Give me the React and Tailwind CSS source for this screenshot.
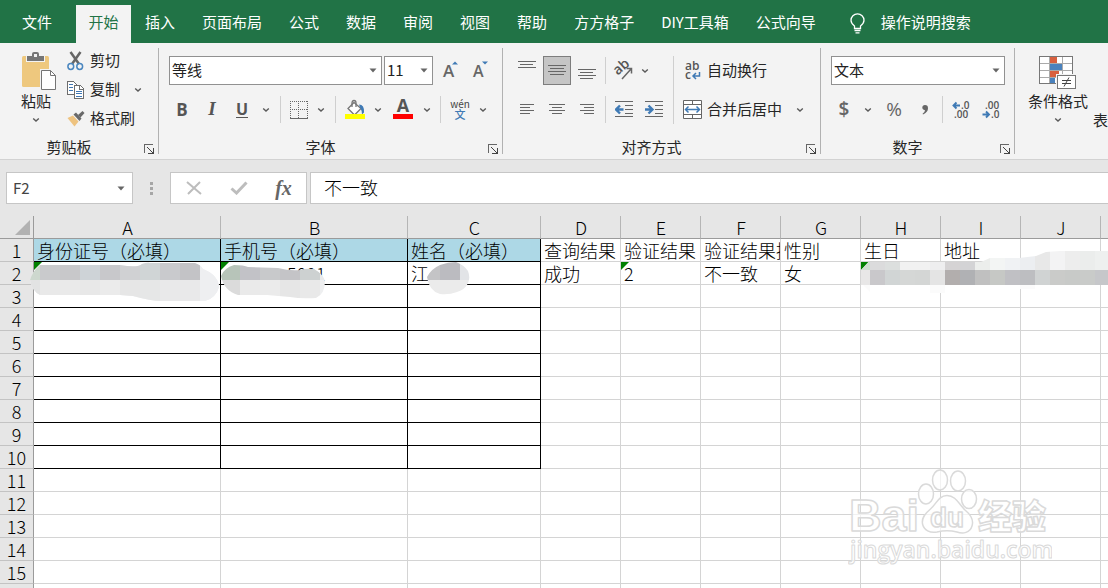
import React from "react";

const tabs = ["插入", "页面布局", "公式", "数据", "审阅", "视图", "帮助", "方方格子", "DIY工具箱", "公式向导"];

const columns = ["A", "B", "C", "D", "E", "F", "G", "H", "I", "J", "K"];

const rows = [
  ["身份证号（必填）", "手机号（必填）", "姓名（必填）", "查询结果", "验证结果", "验证结果描述", "性别", "生日", "地址", "", ""],
  ["", "5001", "江", "成功", "2", "不一致", "女", "", "", "", ""],
  ...Array.from({ length: 14 }, () => Array(11).fill("")),
];

const flagged = [0, 1, 4, 7];

function Chevron() {
  return (
    <svg width="8" height="6" viewBox="0 0 8 6" fill="none" stroke="#5a5a5a" strokeWidth="1.4" aria-hidden="true">
      <path d="M1.2 1.5 4 4.1 6.8 1.5" />
    </svg>
  );
}

function Caret({ className }) {
  return (
    <svg className={className} width="8" height="5" viewBox="0 0 8 5" aria-hidden="true">
      <path d="M0.5 0.5h7L4 4.5z" fill="#666" />
    </svg>
  );
}

function Tool({ label, className = "w-[30px]", children, pressed }) {
  return (
    <button
      type="button"
      aria-label={label}
      aria-pressed={pressed}
      className={`flex h-[29px] shrink-0 items-center justify-center ${className}`}
    >
      {children}
    </button>
  );
}

function More({ label, className = "w-[18px]" }) {
  return (
    <Tool label={label} className={className}>
      <Chevron />
    </Tool>
  );
}

function Combo({ label, value, className }) {
  return (
    <div className={`relative h-[29px] ${className}`}>
      <select aria-label={label} defaultValue={value} className="block h-full w-full appearance-none border border-[#919191] bg-white pl-[2px] text-[15px] text-[#222] outline-none">
        <option>{value}</option>
      </select>
      <Caret className="pointer-events-none absolute right-[5px] top-3" />
    </div>
  );
}

function Divider({ className = "mx-[5px]" }) {
  return <div className={`h-[27px] w-px shrink-0 bg-[#cfcfcf] ${className}`} />;
}

function Group({ title, className, launcher = true, children }) {
  return (
    <section className={`flex shrink-0 flex-col ${className}`}>
      <div className="h-[94px]">{children}</div>
      <div className="flex h-5 items-center">
        <h2 className="flex-1 text-center text-[15px] leading-5">{title}</h2>
        {launcher && (
          <button type="button" aria-label={`${title}设置`} className="flex w-5 pl-[6px] pt-1">
            <svg width="10" height="10" viewBox="0 0 10 10" fill="none" stroke="#666" shapeRendering="crispEdges">
              <path d="M0.5 9V0.5H9" />
              <path d="M3 3l6 6M9.5 4v5.5H4" stroke="#444" />
            </svg>
          </button>
        )}
      </div>
    </section>
  );
}

function GroupLine() {
  return <div className="my-[5px] w-px shrink-0 bg-[#b1b1b1]" />;
}

function Lines({ rows: lines }) {
  return (
    <svg width="20" height="20" viewBox="0 0 20 20" stroke="#666" shapeRendering="crispEdges">
      {lines.map(([x, w, y]) => (
        <path key={y} d={`M${x} ${y}.5h${w}`} />
      ))}
    </svg>
  );
}

function Clipboard() {
  return (
    <Group title="剪贴板" className="w-[158px]">
      <div className="flex pl-[14px]">
        <button type="button" className="flex w-11 flex-col items-center pt-[9px] text-[15px] leading-5">
          <svg width="44" height="38" viewBox="0 0 44 38">
            <path d="M8 5.500q0-1.500 1.500-1.500h24q1.500 0 1.500 1.500V35H9.500Q8 35 8 33.500z" fill="#eec87e" />
            <path d="M12 3h6V2q0-2 2-2h3q2 0 2 2v1h6v7H12z" fill="#f3f3f3" />
            <path d="M13 4h5V2q0-2 2-2h3q2 0 2 2v2h5v5H13z" fill="#767676" />
            <rect x="20" y="2" width="3" height="3" fill="#f3f3f3" />
            <path d="M26 17h17v21H26z" fill="#f3f3f3" />
            <path d="M27.500 18.500h9l5 5v14h-14z" fill="#fff" stroke="#757575" />
            <path d="M36.500 18.500v5h5" fill="none" stroke="#757575" />
          </svg>
          <span className="mt-px">粘贴</span>
          <span className="mt-[6px]"><Chevron /></span>
        </button>
        <div className="ml-[9px] pt-[3px] text-[15px]">
          <button type="button" className="flex h-[29px] items-center gap-[5px]">
            <svg width="18" height="20" viewBox="0 0 18 20" fill="none">
              <path d="M3.500 1 12 13M13.500 1 5 13" stroke="#666" strokeWidth="2.500" />
              <circle cx="3.800" cy="15.500" r="2.900" stroke="#4a86bf" strokeWidth="1.500" />
              <circle cx="12.700" cy="15.500" r="2.900" stroke="#4a86bf" strokeWidth="1.500" />
            </svg>
            剪切
          </button>
          <div className="flex">
            <button type="button" className="flex h-[29px] items-center gap-[5px]">
              <svg width="18" height="20" viewBox="0 0 18 20" fill="#fff" stroke="#6d6d6d" shapeRendering="crispEdges">
                <path d="M.5 1.500h6l3 3v10h-9z" />
                <path d="M7.500 5.500h6l3 3v10h-9z" />
                <path d="M12.500 5.500v4h4" />
                <path d="M2 4.500h4M2 7.500h4M2 10.500h4M9 11.500h6M9 13.500h6M9 16.500h6" stroke="#3f77b3" />
              </svg>
              复制
            </button>
            <More label="复制选项" className="ml-[11px] w-[14px]" />
          </div>
          <button type="button" className="flex h-[29px] items-center gap-[5px]">
            <svg width="18" height="18" viewBox="0 0 18 18">
              <path d="M.5 8 6 5.500 11.500 11.500 7.500 16.500z" fill="#eec380" />
              <path d="M6.500 4.500 9 2.500 14.500 8.500 12.500 11z" fill="#696969" />
              <path d="m11 5 4.500-4 2 2-4 4.500z" fill="#696969" />
            </svg>
            格式刷
          </button>
        </div>
      </div>
    </Group>
  );
}

function FontGroup() {
  return (
    <Group title="字体" className="w-[343px]">
      <div className="flex flex-col gap-[10px] pl-2 pt-[13px]">
        <div className="flex pl-[2px]">
          <Combo label="字体" value="等线" className="mr-[2px] w-[213px]" />
          <Combo label="字号" value="11" className="mr-[2px] w-[49px]" />
          <Tool label="增大字号">
            <svg width="20" height="20" viewBox="0 0 20 20">
              <text x="3" y="16" fontSize="17" fontFamily="Open Sans, sans-serif" fontWeight="600" fill="#666">A</text>
              <path d="M12 3.500h6L15 .5z" fill="#3f7ab5" />
            </svg>
          </Tool>
          <Tool label="减小字号">
            <svg width="20" height="20" viewBox="0 0 20 20">
              <text x="3" y="16" fontSize="16" fontFamily="Open Sans, sans-serif" fontWeight="600" fill="#666">A</text>
              <path d="M12 .5h6l-3 3z" fill="#3f7ab5" />
            </svg>
          </Tool>
        </div>
        <div className="flex items-center">
          <Tool label="加粗"><span className="font-['Open_Sans',sans-serif] text-[17px] font-bold text-[#555]">B</span></Tool>
          <Tool label="倾斜"><span className="font-['Liberation_Serif',serif] text-[19px] font-bold italic text-[#555]">I</span></Tool>
          <Tool label="下划线"><span className="border-b border-[#555] font-['Open_Sans',sans-serif] text-[16px] font-bold leading-4 text-[#555]">U</span></Tool>
          <More label="下划线选项" />
          <Divider />
          <Tool label="边框" className="w-[26px]">
            <svg width="18" height="18" viewBox="0 0 18 18" fill="none" stroke="#666" shapeRendering="crispEdges">
              <path d="M0 .5h18M0 8.500h18M.5 0v17M8.500 0v17M17.500 0v17" strokeDasharray="1 1" />
              <path d="M0 17.500h18" />
            </svg>
          </Tool>
          <More label="边框选项" />
          <Divider />
          <Tool label="填充颜色" className="w-7">
            <svg width="20" height="22" viewBox="0 0 20 22">
              <path d="M9 3.500 16 9.500 9.500 16 3 9.500z" fill="#fff" stroke="#777" strokeWidth="1.300" />
              <path d="M7 8V4q0-2.500 2-2.500T11 4v4" fill="none" stroke="#777" strokeWidth="1.300" />
              <path d="M14 5.500q5.500 0 5 8l-2 2q0-4-1.500-6z" fill="#3f7ab5" />
              <path d="M0 15h20v5H0z" fill="#ff0" />
            </svg>
          </Tool>
          <More label="填充颜色选项" />
          <Tool label="字体颜色" className="w-8">
            <svg width="20" height="22" viewBox="0 0 20 22">
              <text x="10" y="13" textAnchor="middle" fontSize="18" fontFamily="Open Sans, sans-serif" fontWeight="700" fill="#555">A</text>
              <path d="M0 15h20v5H0z" fill="red" />
            </svg>
          </Tool>
          <More label="字体颜色选项" className="w-4" />
          <Divider />
          <Tool label="拼音" className="w-7">
            <svg width="20" height="22" viewBox="0 0 20 22" textAnchor="middle" fontFamily="Noto Sans CJK SC, sans-serif">
              <text x="10" y="9" fontSize="10" fill="#444">wén</text>
              <text x="10" y="20" fontSize="11" fontWeight="500" fill="#3f7ab5">文</text>
            </svg>
          </Tool>
          <More label="拼音选项" />
        </div>
      </div>
    </Group>
  );
}

function AlignGroup() {
  return (
    <Group title="对齐方式" className="w-[317px]">
      <div className="flex pl-[9px] pt-[13px]">
        <div className="flex flex-col gap-[10px]">
          <div className="flex items-center">
            <Tool label="顶端对齐"><Lines rows={[[1, 18, 0], [3, 13, 3], [1, 18, 6]]} /></Tool>
            <Tool label="垂直居中" pressed className="mx-px w-7 border border-[#7d7d7d] bg-[#c5c5c5]">
              <Lines rows={[[1, 18, 4], [3, 14, 7], [1, 18, 10], [3, 14, 13]]} />
            </Tool>
            <Tool label="底端对齐"><Lines rows={[[1, 18, 8], [3, 13, 11], [1, 18, 14], [3, 13, 17]]} /></Tool>
            <Divider className="mx-[3px]" />
            <Tool label="方向">
              <svg width="22" height="20" viewBox="0 0 22 20">
                <text x="3" y="14" fontSize="14" fontFamily="Open Sans, sans-serif" fontWeight="600" fill="#555" transform="rotate(-42 5 12)">ab</text>
                <path d="M9 18 18 8M13.500 7.500h5v5" fill="none" stroke="#666" strokeWidth="1.500" />
              </svg>
            </Tool>
            <More label="方向选项" className="w-3" />
          </div>
          <div className="flex items-center">
            <Tool label="左对齐"><Lines rows={[[3, 14, 4], [3, 10, 7], [3, 14, 10], [3, 10, 13]]} /></Tool>
            <Tool label="居中"><Lines rows={[[2, 16, 4], [5, 10, 7], [2, 16, 10], [5, 10, 13]]} /></Tool>
            <Tool label="右对齐"><Lines rows={[[3, 14, 4], [7, 10, 7], [3, 14, 10], [7, 10, 13]]} /></Tool>
            <Divider className="mx-[3px]" />
            <Tool label="减少缩进量">
              <svg width="18" height="17" viewBox="0 0 18 17">
                <path d="M0 .5h18M10 4.500h8M10 8.500h8M10 12.500h8M0 15.500h18" stroke="#666" shapeRendering="crispEdges" />
                <path d="M8.500 8.500H1.500M5 4.500 1 8.500l4 4" fill="none" stroke="#3f7ab5" strokeWidth="2.400" />
              </svg>
            </Tool>
            <Tool label="增加缩进量">
              <svg width="18" height="17" viewBox="0 0 18 17">
                <path d="M0 .5h18M10 4.500h8M10 8.500h8M10 12.500h8M0 15.500h18" stroke="#666" shapeRendering="crispEdges" />
                <path d="M0 8.500h7M3.500 4.500l4 4-4 4" fill="none" stroke="#3f7ab5" strokeWidth="2.400" />
              </svg>
            </Tool>
          </div>
        </div>
        <div className="ml-1 w-px bg-[#cfcfcf]" />
        <div className="ml-2 flex flex-col gap-[10px] text-[15px]">
          <button type="button" aria-label="自动换行" className="flex h-[29px] items-center gap-[5px]">
            <svg width="20" height="20" viewBox="0 0 20 20">
              <text x="3" y="9" fontSize="12" fontFamily="Open Sans, sans-serif" fontWeight="600" fill="#555">ab</text>
              <text x="3" y="18" fontSize="12" fontFamily="Open Sans, sans-serif" fontWeight="600" fill="#555">c</text>
              <path d="M17.500 11v4h-6M14 12l-3 3 3 3" fill="none" stroke="#3f7ab5" strokeWidth="1.500" />
            </svg>
            自动换行
          </button>
          <div className="flex">
            <button type="button" className="flex h-[29px] items-center gap-[5px]">
              <svg width="20" height="20" viewBox="0 0 20 20">
                <path d="M1.500.5h18v18h-18z" fill="#fff" stroke="#666" />
                <path d="M1 4.500h19M1 14.500h19M10.500 1v4M10.500 14v5" stroke="#666" shapeRendering="crispEdges" />
                <path d="M4 9.500h13M6.500 6.500l-3 3 3 3M14.500 6.500l3 3-3 3" fill="none" stroke="#3f7ab5" strokeWidth="1.500" />
              </svg>
              合并后居中
            </button>
            <More label="合并选项" className="ml-[9px] w-[18px]" />
          </div>
        </div>
      </div>
    </Group>
  );
}

function NumberGroup() {
  return (
    <Group title="数字" className="w-[193px]">
      <div className="flex flex-col gap-[10px] pl-2 pt-[13px]">
        <Combo label="数字格式" value="文本" className="ml-[2px] w-[174px]" />
        <div className="flex items-center text-[#666]">
          <Tool label="会计数字格式"><span className="font-['Open_Sans',sans-serif] text-[19px] font-semibold">$</span></Tool>
          <More label="会计数字格式选项" />
          <Tool label="百分比样式" className="w-[34px]"><span className="font-['Open_Sans',sans-serif] text-[19px]">%</span></Tool>
          <Tool label="千位分隔样式" className="w-7">
            <svg width="8" height="11" viewBox="0 0 8 11"><path d="M4 1q3 0 3 3.300 0 4-5 6.200l-.4-.8Q4 8 4 6.200 1.300 6 1.300 3.600 1.400 1 4 1z" fill="#666" /></svg>
          </Tool>
          <Divider className="mx-[3px]" />
          <Tool label="增加小数位数">
            <svg width="18" height="20" viewBox="0 0 18 20" fontFamily="Open Sans, sans-serif" fontSize="10" fontWeight="600" fill="#555">
              <text x="9" y="9">.0</text>
              <text x="2" y="18">.00</text>
              <path d="M8 5.500H2M4.500 2.500l-3 3 3 3" fill="none" stroke="#3f7ab5" strokeWidth="1.900" />
            </svg>
          </Tool>
          <Tool label="减少小数位数">
            <svg width="18" height="20" viewBox="0 0 18 20" fontFamily="Open Sans, sans-serif" fontSize="10" fontWeight="600" fill="#555">
              <text x="3" y="9">.00</text>
              <text x="9" y="18">.0</text>
              <path d="M.5 14.500h6M4 11.500l3 3-3 3" fill="none" stroke="#3f7ab5" strokeWidth="1.900" />
            </svg>
          </Tool>
        </div>
      </div>
    </Group>
  );
}

function StylesGroup() {
  return (
    <div className="flex shrink-0 text-[15px] leading-5">
      <button type="button" className="ml-2 flex w-[70px] flex-col items-center pt-[13px]">
        <svg width="38" height="34" viewBox="0 0 38 34" shapeRendering="crispEdges">
          <path d="M.5.500h33v27H.5z" fill="#fff" stroke="#777" />
          <path d="M11 1h7v6h-7zM11 15h9v6h-9z" fill="#d8603f" />
          <path d="M11 8h12v6H11zM11 22h5v5h-5z" fill="#4a82bd" />
          <path d="M1 7.500h32M1 14.500h32M1 21.500h32M10.500 1v26M23.500 1v26" stroke="#aaa" />
          <path d="M17 18h21v16H17z" fill="#f3f3f3" />
          <path d="M18.500 19.500h18v13h-18z" fill="#fff" stroke="#777" />
          <path d="M23 24.500h9M23 27.500h9M30 21.500l-5 9" stroke="#444" shapeRendering="auto" />
        </svg>
        <span className="mt-px whitespace-nowrap">条件格式</span>
        <span className="mt-[6px]"><Chevron /></span>
      </button>
      <button type="button" className="whitespace-nowrap pt-[37px]">表格格式</button>
    </div>
  );
}

function Grid() {
  return (
    <div className="relative flex-1 overflow-hidden bg-white">
      <table className="w-[1181px] table-fixed border-separate border-spacing-0 text-[18px] font-light leading-[22px] text-black">
        <colgroup>
          <col className="w-[34px]" />
          <col className="w-[187px]" />
          <col className="w-[187px]" />
          <col className="w-[133px]" />
          {columns.slice(3).map((c) => <col key={c} className="w-[80px]" />)}
        </colgroup>
        <thead>
          <tr className="h-[23px] bg-[#e6e6e6]">
            <th className="border-b border-r border-[#9b9b9b] p-0">
              <svg className="ml-auto mr-[3px]" width="15" height="15" viewBox="0 0 15 15"><path d="M15 0v15H0z" fill="#b2b2b2" /></svg>
            </th>
            {columns.map((c) => (
              <th key={c} scope="col" className="border-b border-r border-b-[#9b9b9b] border-r-[#b5b5b5] p-0 pl-px font-light">{c}</th>
            ))}
          </tr>
        </thead>
        <tbody>
          {rows.map((row, r) => (
            <tr key={r} className="h-[23px]">
              <th scope="row" className="border-b border-r border-b-[#c3c3c3] border-r-[#9b9b9b] bg-[#e6e6e6] p-0 font-light">{r + 1}</th>
              {row.map((value, c) => {
                const line = c < 3 && r < 10 ? "border-black" : "border-[#d4d4d4]";
                const fill = c < 3 && r === 0 ? "bg-[#add8e6]" : "";
                const pad = r === 1 && c === 1 ? "pl-[66px]" : "pl-[3px]";
                return (
                  <td key={c} className={`relative overflow-hidden whitespace-nowrap border-b border-r py-0 pr-0 ${line} ${fill} ${pad}`}>
                    {r === 1 && flagged.includes(c) && (
                      <svg className="absolute left-0 top-0" width="8" height="8" viewBox="0 0 8 8"><path d="M0 0h8L0 8z" fill="#008000" /></svg>
                    )}
                    {value}
                  </td>
                );
              })}
            </tr>
          ))}
        </tbody>
      </table>
      <Masks />
      <Watermark />
    </div>
  );
}

const maskTop = ["#cdd8ce", "#c9cacc", "#c8c8ca", "#ced3d7", "#c8c8cb", "#d0d1d3", "#d0d5d6", "#c9cacd", "#c3c3c6", "#cbcbcd"];
const maskLow = ["#e2e3e3", "#e9e9e9", "#eaeaea", "#e8e8e8", "#ebebeb", "#e6e6e6", "#e6e7e7", "#e9e9ea", "#e9e9ea", "#eaeaeb"];
const phoneTop = ["#b7c4b9", "#c2c2c7", "#c8c9cb", "#c4c4c7", "#cdd1d1", "#e9eaeb"];
const phoneLow = ["#dbdbdb", "#eaeaea", "#ebebeb", "#e6e6e6", "#e9e9e9", "#eeeff0"];
const addrTop = ["#ceddd0", "#dbdbdc", "#dcdfde", "#f1f1f1", "#f1f1f1", "#eeeeef", "#d5d3d4", "#d3d3d5", "#eceeec", "#f3f5f4", "#f0f2f4", "#eceef1", "#e8e8e8", "#f3f3f4", "#ededed", "#ebedec", "#eef0ef"];
const addrLow = ["#e8e7e7", "#c9c8cb", "#d1d5d5", "#d5d7d6", "#d4d6d5", "#e4e4e4", "#b2aead", "#b0b1b4", "#c0c0c0", "#c6c8c5", "#c0c0c4", "#bdbec1", "#d0d3d3", "#cacbc9", "#c8cac8", "#c9cbc9", "#c6c7ca"];

function Masks() {
  return (
    <svg className="pointer-events-none absolute left-0 top-0" width="1108" height="100" viewBox="0 216 1108 100" aria-hidden="true">
      <defs>
        <clipPath id="mask-id"><path d="M30 280q2-8 10-15h80q18 3 22-1 6-2 8-1h45q6 2 8 6 8 3 12 8 4 5 4 10-3 11-14 14h-44q-10 0-28-5l-13-1H40q-8-4-10-15z" /></clipPath>
        <clipPath id="mask-phone"><path d="M221 276q3-8 13-11 10 0 14 2l30 1q12 3 22 2 6-2 14-1 9 5 11 12 0 13-9 17-15 1-26-1l-23-2h-29q-14-4-17-19z" /></clipPath>
        <clipPath id="mask-name"><path d="M427 277q4-8 13-12 8-3 16-3 8 3 12 9 3 8-1 14-3 5-10 7-8 3-17 2-11-3-13-17z" /></clipPath>
        <clipPath id="mask-addr"><path d="M868 262h113l9-4h29l17-2 10-4 14-1h48v34H861V270z" /></clipPath>
      </defs>
      <g clipPath="url(#mask-id)">
        <path d="M20 255h200v50H20z" fill="#eeeff1" />
        <path d="M200 255h20v50h-20z" fill="#eeeff1" />
        {maskTop.slice(0, 9).map((fill, i) => <rect key={i} x={20 + i * 20} y="260" width="20" height="20" fill={fill} />)}
        {maskLow.slice(0, 9).map((fill, i) => <rect key={i} x={20 + i * 20} y="280" width="20" height="24" fill={fill} />)}
      </g>
      <g clipPath="url(#mask-phone)">
        {phoneTop.map((fill, i) => <rect key={i} x={220 + i * 20} y="260" width="20" height="20" fill={fill} />)}
        {phoneLow.map((fill, i) => <rect key={i} x={220 + i * 20} y="280" width="20" height="24" fill={fill} />)}
      </g>
      <g clipPath="url(#mask-name)">
        <path d="M420 260h20v20h-20z" fill="#c4c4c6" />
        <path d="M440 260h20v20h-20z" fill="#bbbbc0" />
        <path d="M460 260h20v20h-20z" fill="#e2e4e7" />
        <path d="M420 280h60v20h-60z" fill="#ebebeb" />
      </g>
      <g clipPath="url(#mask-addr)">
        {addrTop.map((fill, i) => <rect key={i} x={855 + i * 15} y="250" width="15" height="20" fill={fill} />)}
        {addrLow.map((fill, i) => <rect key={i} x={855 + i * 15} y="270" width="15" height="15" fill={fill} />)}
      </g>
      <path d="M861 262h7l-7 7z" fill="#008000" />
      <path d="M930 285h15v8h-15zM1020 285h15v4h-15zM863 285h7v7z" fill="#fbfbfb" />
    </svg>
  );
}

function Watermark() {
  return (
    <svg className="pointer-events-none absolute bottom-5 right-14" width="204" height="100" viewBox="848 468 204 100" fill="#fff" fillOpacity="0.7" stroke="#dadada" strokeWidth="1.500" strokeLinejoin="round">
      <text x="849" y="531" fontFamily="Liberation Sans, sans-serif" fontWeight="700" fontSize="45">Bai</text>
      <ellipse cx="926" cy="494" rx="7.500" ry="10" />
      <ellipse cx="940" cy="480" rx="7.500" ry="10" />
      <ellipse cx="958" cy="481" rx="7.500" ry="10" />
      <ellipse cx="969" cy="499" rx="7.500" ry="9.500" />
      <path d="M947 495.500c9 0 12 9 18 14.500 6 5 9 10 7 16-2 7-9 8-15 6-6-1.500-14-1.500-20 0-7 1.500-13-2-14.500-8-1-6 2-10 8-15 6-5 8-13.500 16.500-13.500z" />
      <text x="930" y="527" fontFamily="Liberation Sans, sans-serif" fontWeight="700" fontSize="28">du</text>
      <text x="978" y="529" fontFamily="Noto Sans CJK SC, sans-serif" fontWeight="900" fontSize="34">经验</text>
      <text x="850" y="558" fontFamily="Open Sans, sans-serif" fontWeight="600" fontSize="23" strokeWidth="1">jingyan.baidu.com</text>
    </svg>
  );
}

export default function App() {
  return (
    <div className="flex h-screen flex-col overflow-hidden bg-[#e6e6e6] font-['Noto_Sans_CJK_SC',sans-serif] text-[#262626]">
      <nav className="flex h-[43px] shrink-0 items-end overflow-hidden whitespace-nowrap bg-[#217346] text-[15px] text-white">
        <button type="button" className="ml-[10px] mr-3 h-[38px] px-3 pb-[3px]">文件</button>
        <button type="button" aria-current="page" className="mr-[2px] h-[38px] w-[55px] bg-[#f3f3f3] pb-[3px] text-[#217346]">开始</button>
        <div className="flex gap-[3px]">
          {tabs.map((t) => <button type="button" key={t} className="h-[38px] px-3 pb-[3px]">{t}</button>)}
        </div>
        <button type="button" className="ml-[22px] flex h-[38px] items-center gap-4 pb-[3px]">
          <svg className="mt-[2px]" width="15" height="21" viewBox="0 0 15 21" fill="none" stroke="#fff" strokeWidth="1.300">
            <path d="M4.500 15.500v-2.500C2.500 11.500 1 10 1 7.300a6.500 6.500 0 0 1 13 0c0 2.700-1.500 4.200-3.500 5.700v2.500zM4.500 17.500h6M5.500 19.800h4" />
          </svg>
          操作说明搜索
        </button>
      </nav>
      <div className="flex h-[117px] shrink-0 overflow-hidden border-b border-[#d2d2d2] bg-[#f3f3f3]">
        <Clipboard />
        <GroupLine />
        <FontGroup />
        <GroupLine />
        <AlignGroup />
        <GroupLine />
        <NumberGroup />
        <GroupLine />
        <StylesGroup />
      </div>
      <div className="flex shrink-0 items-center py-3 pl-[6px]">
        <div className="flex h-8 w-[127px] items-center border border-[#c6c6c6] bg-white">
          <input aria-label="名称框" defaultValue="F2" className="w-0 flex-1 pl-[6px] text-[15px] text-[#444] outline-none" />
          <button type="button" aria-label="名称列表" className="px-[7px]"><Caret /></button>
        </div>
        <svg className="mx-[17px]" width="3" height="13" viewBox="0 0 3 13" fill="#a6a6a6"><path d="M0 0h3v3H0zM0 5h3v3H0zM0 10h3v3H0z" /></svg>
        <div className="mr-[3px] flex h-8 items-center border border-[#c6c6c6] bg-white">
          <button type="button" aria-label="取消" className="flex w-[45px] justify-center">
            <svg width="16" height="14" viewBox="0 0 16 14" stroke="#bdbdbd" strokeWidth="2"><path d="M1 1l14 12M14 1 2 13" /></svg>
          </button>
          <button type="button" aria-label="输入" className="flex w-[45px] justify-center">
            <svg width="18" height="14" viewBox="0 0 18 14" fill="none" stroke="#bdbdbd" strokeWidth="3"><path d="M1.500 7.500 6.500 12 16.500 1.500" /></svg>
          </button>
          <button type="button" aria-label="插入函数" className="w-[45px] font-['Liberation_Serif',serif] text-[20px] font-bold italic leading-6 text-[#666]">fx</button>
        </div>
        <input aria-label="编辑栏" defaultValue="不一致" className="h-8 w-0 flex-1 border border-r-0 border-[#c6c6c6] bg-white pb-[2px] pl-[13px] text-[18px] font-light text-black outline-none" />
      </div>
      <Grid />
    </div>
  );
}
